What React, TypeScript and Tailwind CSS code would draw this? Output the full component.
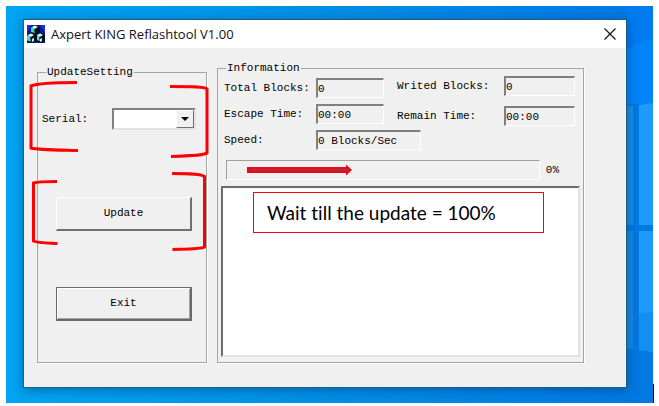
import { useState } from "react";
import type { ReactNode } from "react";

const leftFields = [
  { id: "total", label: "Total Blocks:", value: "0", width: "w-[68px]" },
  { id: "escape", label: "Escape Time:", value: "00:00", width: "w-[68px]" },
  { id: "speed", label: "Speed:", value: "0 Blocks/Sec", width: "w-[105px]" },
];

const rightFields = [
  { id: "writed", label: "Writed Blocks:", value: "0", width: "w-[71px]" },
  { id: "remain", label: "Remain Time:", value: "00:00", width: "w-[71px]" },
];

function AppIcon() {
  return (
    <svg viewBox="0 0 18 18" className="h-[18px] w-[18px] shrink-0" aria-hidden="true">
      <rect width="18" height="18" fill="#0a1a9c" />
      <path d="M0 0h5L0 7zM13 0h5v8z" fill="#1c2fd0" />
      <path d="M4 2l4-2 5 2v6l-4 2-5-2z" fill="#03101c" />
      <path d="M0 10l4-2 5 2v6l-4 2-5-2z" fill="#03101c" />
      <path d="M9 10l4-2 5 2v6l-4 2-5-2z" fill="#03101c" />
      <path d="M4 2.500L8 1l1 2-2 2 1 3-4-1z" fill="#4fd0cf" />
      <path d="M0 10.500L4 9l2 1.500-3 2 1 4-4-1z" fill="#4fd0cf" />
      <path d="M10 10.500L13 9l2 1.500-3 2 1 3.500-3-1z" fill="#5cd8d6" />
      <path d="M5 2l3-1.500L11 2 8 3.500zM1 10l3-1.500L7 10l-3 1.500zM10 10l3-1.500 3 1.500-3 1.500z" fill="#e9ffff" />
      <path d="M5 14l2-1v3l-2 1zM13 14l2-1v3l-2 1z" fill="#cfe9ee" />
    </svg>
  );
}

function Wallpaper() {
  return (
    <svg
      viewBox="0 0 26 397"
      preserveAspectRatio="none"
      className="absolute inset-y-0 right-0 h-full w-[26px]"
      aria-hidden="true"
    >
      <path d="M0 0h26v397H0z" fill="#0079e2" />
      <path d="M0 0h26v98H0z" fill="#007bf0" />
      <path d="M0 43q14-8 26-10v65H0z" fill="#0084fa" />
      <path d="M0 100h6v119H0z" fill="#1a8ee6" />
      <path d="M12 99l14-2v122H12z" fill="#1e9bff" />
      <path d="M0 225h6v118H0z" fill="#1688e0" />
      <path d="M12 225h14v121l-14-2z" fill="#1e9bff" />
      <path d="M12 308q8-2 14-2v40l-14-2z" fill="#1290f2" />
    </svg>
  );
}

function Group({ title, children }: { title: string; children: ReactNode }) {
  return (
    <fieldset className="flex min-w-0 flex-1 flex-col border border-[#a5a5a5] shadow-[1px_1px_0_#fff]">
      <legend className="ml-2 px-px leading-4">{title}</legend>
      {children}
    </fieldset>
  );
}

function Field({ id, label, value, width, labelWidth }: {
  id: string;
  label: string;
  value: string;
  width: string;
  labelWidth: string;
}) {
  return (
    <div className="flex items-center">
      <label htmlFor={id} className={`shrink-0 whitespace-nowrap leading-4 ${labelWidth}`}>
        {label}
      </label>
      <input
        id={id}
        readOnly
        value={value}
        className={`h-5 border border-t-2 border-l-2 border-t-[#808080] border-r-white border-b-white border-l-[#808080] bg-[#f0f0f0] outline-none ${width}`}
      />
    </div>
  );
}

function Brackets() {
  return (
    <svg
      viewBox="0 0 180 180"
      className="pointer-events-none absolute -left-2 top-4 h-[180px] w-[180px]"
      fill="none"
      stroke="#ff0000"
      strokeWidth="3"
      aria-hidden="true"
    >
      <path d="M48 2.5C29 2.5 9 3 2 6v62c7 2 28 2 47 2.5" />
      <path d="M141 6.5c18 0 35 0 37 2.500V73c-3 2.500-18 3-36 3.500" />
      <path d="M28 101.500c-9 0-19 0-23.500 1.500v58c4 2 14 2 24 2.500" />
      <path d="M143 93.500c16 0 29 0 32.500 3V167c-3 2-16 2-32 2.500" />
    </svg>
  );
}

export default function App() {
  const [serial, setSerial] = useState("");

  return (
    <div className="flex min-h-screen bg-white px-1.5 pt-1.5 pb-[3px] font-['Liberation_Mono',monospace] text-[11px] text-black">
      <main className="relative flex flex-1 bg-linear-to-r from-[#00a5f2] via-[#008fe6] to-[#0078e4] pt-[13px] pr-[26px] pb-[15px] pl-[17px]">
        <Wallpaper />
        <div className="absolute right-[-1px] bottom-0 h-[19px] w-px bg-black" />

        <section className="relative flex min-w-0 flex-1 flex-col border border-[#1d5c85] bg-[#f0f0f0] shadow-[0_2px_10px_rgba(0,40,90,0.45)]">
          <header className="flex h-7 items-center bg-white pr-2.5 pl-[3px]">
            <AppIcon />
            <h1 className="ml-1.5 flex-1 font-['Open_Sans',sans-serif] text-[13px] leading-4 text-[#111]">
              Axpert KING Reflashtool V1.00
            </h1>
            <button aria-label="Close" className="flex h-3 w-3 items-center justify-center">
              <svg viewBox="0 0 12 12" className="h-3 w-3" stroke="#111" strokeWidth="1.2">
                <path d="M.5.5l11 11M11.500.5l-11 11" />
              </svg>
            </button>
          </header>

          <div className="flex flex-1 gap-2.5 pr-[42px] pb-6 pl-[13px]">
            <div className="relative mt-4 flex w-[170px] shrink-0">
              <Group title="UpdateSetting">
                <div className="flex items-center pt-7 pr-2.5 pl-1">
                  <label htmlFor="serial" className="flex-1 leading-4">
                    Serial:
                  </label>
                  <div className="relative h-[22px] w-[84px]">
                    <select
                      id="serial"
                      value={serial}
                      onChange={(e) => setSerial(e.target.value)}
                      className="h-full w-full appearance-none border-2 border-t-[#808080] border-r-[#e3e3e3] border-b-[#e3e3e3] border-l-[#808080] bg-white pl-1 outline-none"
                    >
                      <option value=""></option>
                      <option value="COM1">COM1</option>
                      <option value="COM2">COM2</option>
                    </select>
                    <span className="pointer-events-none absolute top-0.5 right-0.5 flex h-[18px] w-[18px] items-center justify-center border border-t-white border-r-[#707070] border-b-[#707070] border-l-white bg-[#f0f0f0]">
                      <svg viewBox="0 0 8 4" className="h-1 w-2">
                        <path d="M0 0h8L4 4z" />
                      </svg>
                    </span>
                  </div>
                </div>
                <div className="flex flex-col gap-14 pt-[67px] pr-3.5 pl-[18px]">
                  <button className="h-[34px] border border-r-2 border-b-2 border-t-white border-r-[#707070] border-b-[#707070] border-l-white bg-[#f0f0f0]">
                    Update
                  </button>
                  <button className="h-[34px] border border-r-2 border-b-2 border-[#696969] bg-[#f0f0f0] shadow-[inset_1px_1px_0_#fff,inset_-1px_-1px_0_#a0a0a0]">
                    Exit
                  </button>
                </div>
              </Group>
              <Brackets />
            </div>

            <div className="mt-3 flex min-w-0 flex-1">
              <Group title="Information">
                <div className="flex justify-between pr-2 pl-1.5">
                  <div className="flex w-[160px] flex-col gap-1.5 pt-0.5">
                    {leftFields.map((field) => (
                      <Field key={field.id} {...field} labelWidth="w-[92px]" />
                    ))}
                  </div>
                  <div className="flex flex-col gap-2.5">
                    {rightFields.map((field) => (
                      <Field key={field.id} {...field} labelWidth="w-[107px]" />
                    ))}
                  </div>
                </div>

                <div className="mt-2.5 flex items-center gap-1.5 pr-6 pl-2">
                  <div
                    role="progressbar"
                    aria-label="Update progress"
                    aria-valuenow={0}
                    className="flex h-5 flex-1 items-center border border-t-[#a0a0a0] border-r-white border-b-white border-l-[#a0a0a0] pl-5"
                  >
                    <svg viewBox="0 0 105 12" className="h-3 w-[105px]" aria-hidden="true">
                      <path d="M0 3h99V.5l6 5.500-6 5.500V9H0z" fill="#ff0000" />
                      <path d="M2 6h100" stroke="#8a3a5c" strokeWidth="2" />
                    </svg>
                  </div>
                  <span>0%</span>
                </div>

                <div className="relative mx-[3px] mt-1.5 mb-[5px] flex flex-1">
                  <textarea
                    readOnly
                    aria-label="Log"
                    className="min-w-0 flex-1 resize-none border-2 border-t-[#6c6c6c] border-r-[#e3e3e3] border-b-[#e3e3e3] border-l-[#6c6c6c] bg-white outline-none"
                  />
                  <p className="absolute top-1.5 right-9 left-8 h-[41px] border border-[#ff0000] bg-white pl-[13px] font-['Lato',sans-serif] text-[19px] leading-[40px] whitespace-nowrap [font-variant-ligatures:none]">
                    Wait till the update = 100%
                  </p>
                </div>
              </Group>
            </div>
          </div>
        </section>
      </main>
    </div>
  );
}
